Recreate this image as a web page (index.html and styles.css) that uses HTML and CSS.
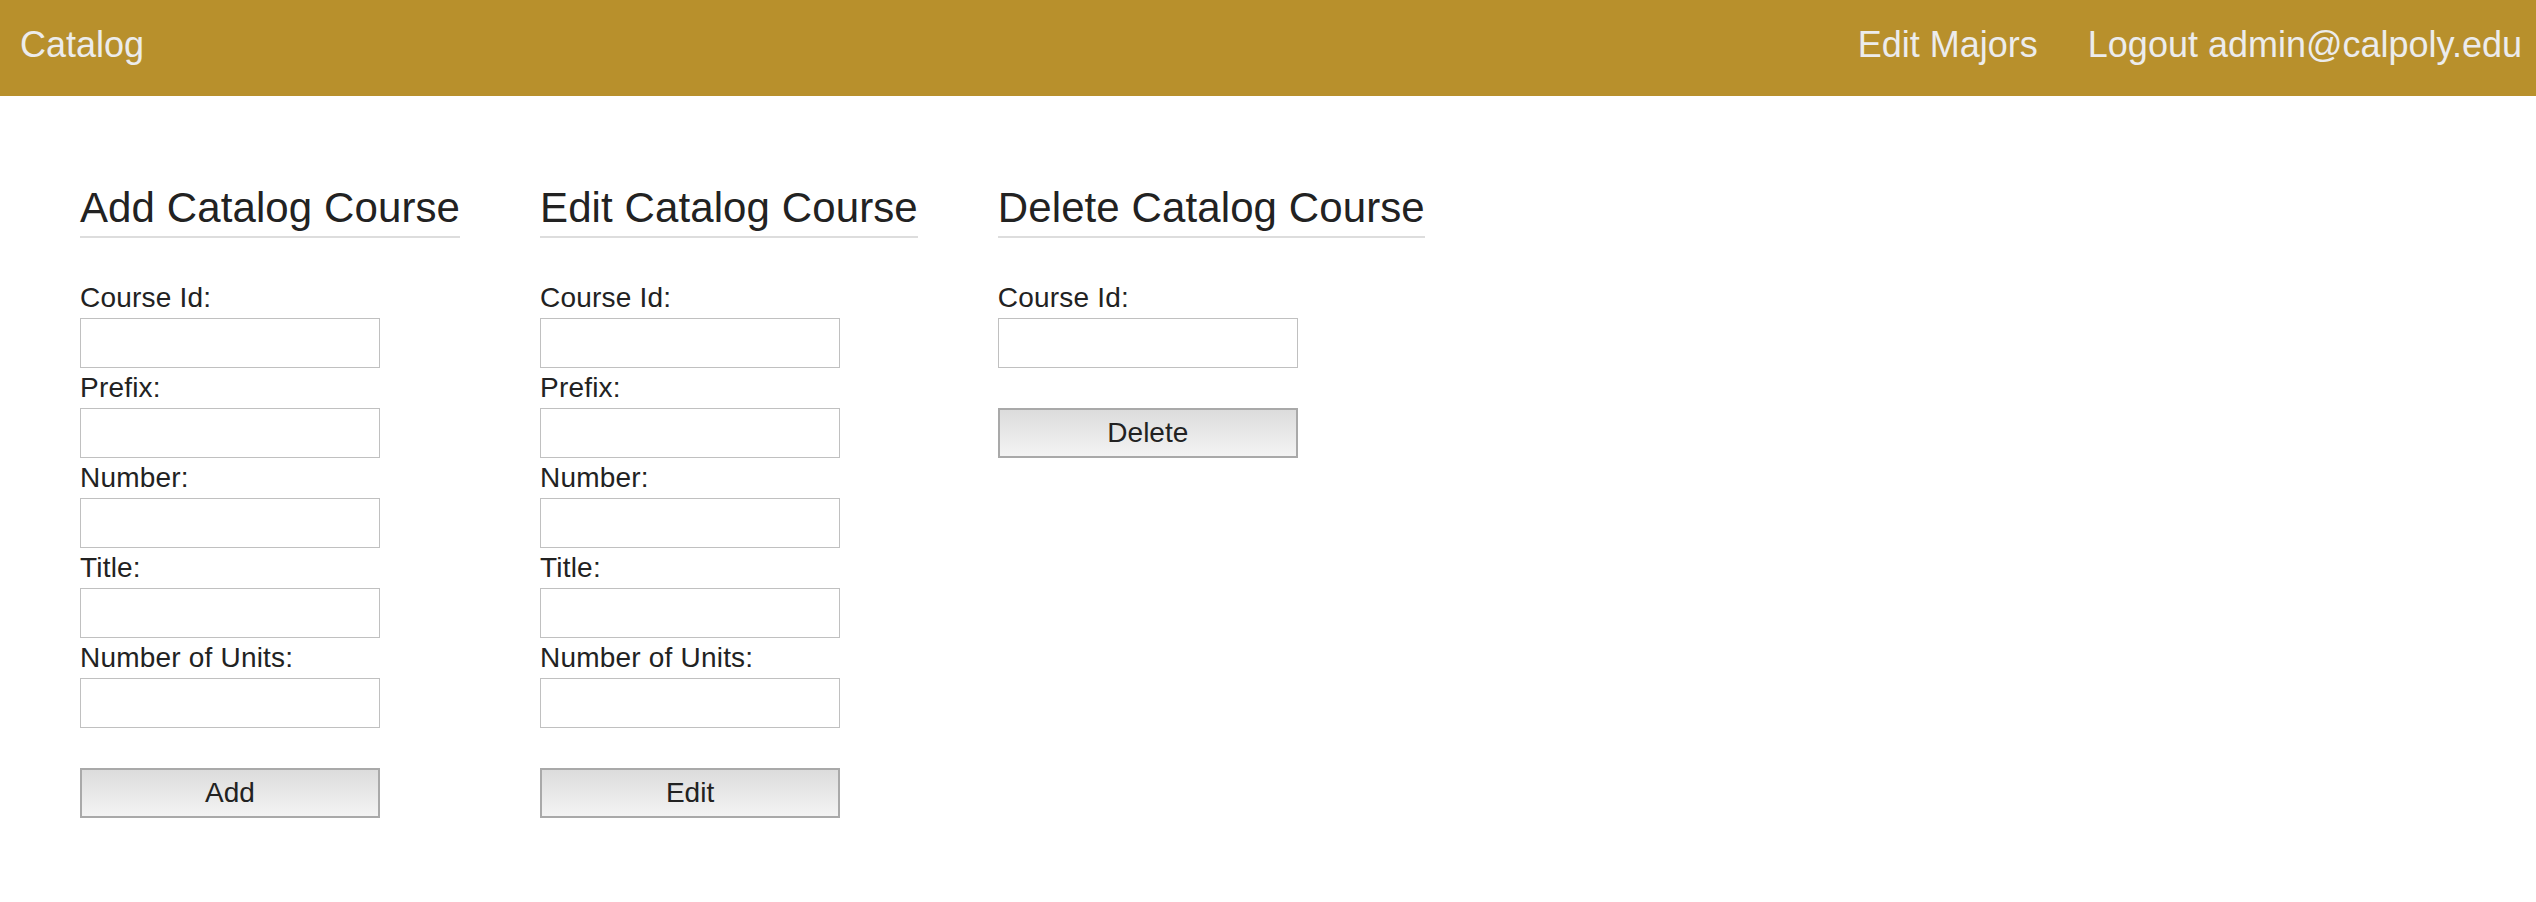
FILE: index.html
```html
<!DOCTYPE html>
<html>
<head>
<meta charset="utf-8">
<title>Catalog</title>
<link rel="stylesheet" href="styles.css">
</head>
<body>
<nav class="navbar">
  <a class="brand" href="#">Catalog</a>
  <div class="nav-links">
    <a class="nav-link" href="#">Edit Majors</a>
    <a class="nav-link" href="#">Logout admin@calpoly.edu</a>
  </div>
</nav>
<main class="content">
  <section class="panel">
    <h3 class="panel-title">Add Catalog Course</h3>
    <form class="course-form">
      <label class="field-label">Course Id:</label>
      <input class="field-input" type="text">
      <label class="field-label">Prefix:</label>
      <input class="field-input" type="text">
      <label class="field-label">Number:</label>
      <input class="field-input" type="text">
      <label class="field-label">Title:</label>
      <input class="field-input" type="text">
      <label class="field-label">Number of Units:</label>
      <input class="field-input" type="text">
      <button class="form-button" type="button">Add</button>
    </form>
  </section>
  <section class="panel">
    <h3 class="panel-title">Edit Catalog Course</h3>
    <form class="course-form">
      <label class="field-label">Course Id:</label>
      <input class="field-input" type="text">
      <label class="field-label">Prefix:</label>
      <input class="field-input" type="text">
      <label class="field-label">Number:</label>
      <input class="field-input" type="text">
      <label class="field-label">Title:</label>
      <input class="field-input" type="text">
      <label class="field-label">Number of Units:</label>
      <input class="field-input" type="text">
      <button class="form-button" type="button">Edit</button>
    </form>
  </section>
  <section class="panel">
    <h3 class="panel-title">Delete Catalog Course</h3>
    <form class="course-form">
      <label class="field-label">Course Id:</label>
      <input class="field-input" type="text">
      <button class="form-button" type="button">Delete</button>
    </form>
  </section>
</main>
</body>
</html>
```
FILE: styles.css
```css
* {
  box-sizing: border-box;
}

html, body {
  margin: 0;
  padding: 0;
  background: #ffffff;
  font-family: "Liberation Sans", Arial, Helvetica, sans-serif;
  color: #222222;
}

.navbar {
  height: 96px;
  background: #b8902c;
  display: flex;
  align-items: flex-start;
  justify-content: space-between;
  padding: 25px 14px 0 20px;
}

.brand,
.nav-link {
  font-size: 36px;
  line-height: 40px;
  color: #ececec;
  text-decoration: none;
  white-space: nowrap;
}

.nav-links {
  display: flex;
  gap: 50px;
}

.content {
  display: flex;
  align-items: flex-start;
  gap: 80px;
  padding: 89px 0 0 80px;
}

.panel {
  display: flex;
  flex-direction: column;
  align-items: flex-start;
}

.panel-title {
  margin: 0 0 40px 0;
  font-size: 42px;
  font-weight: normal;
  line-height: 46px;
  letter-spacing: 0.1px;
  padding-bottom: 5px;
  border-bottom: 2px solid #dddddd;
  color: #222222;
  white-space: nowrap;
}

.course-form {
  display: flex;
  flex-direction: column;
  align-items: flex-start;
}

.field-label {
  font-size: 28px;
  line-height: 40px;
  letter-spacing: 0.2px;
  color: #222222;
}

.field-input {
  width: 300px;
  height: 50px;
  margin: 0;
  border: 1px solid #c0c0c0;
  border-radius: 0;
  background: #ffffff;
  font-family: "Liberation Sans", Arial, sans-serif;
  font-size: 28px;
  padding: 0 8px;
  outline: none;
}

.form-button {
  margin-top: 40px;
  width: 300px;
  height: 50px;
  border: 2px solid #a9a9a9;
  border-radius: 0;
  background: linear-gradient(to bottom, #dcdcdc 0%, #f3f3f3 100%);
  font-family: "Liberation Sans", Arial, sans-serif;
  font-size: 28px;
  color: #222222;
  padding: 0;
  line-height: 46px;
}
```
